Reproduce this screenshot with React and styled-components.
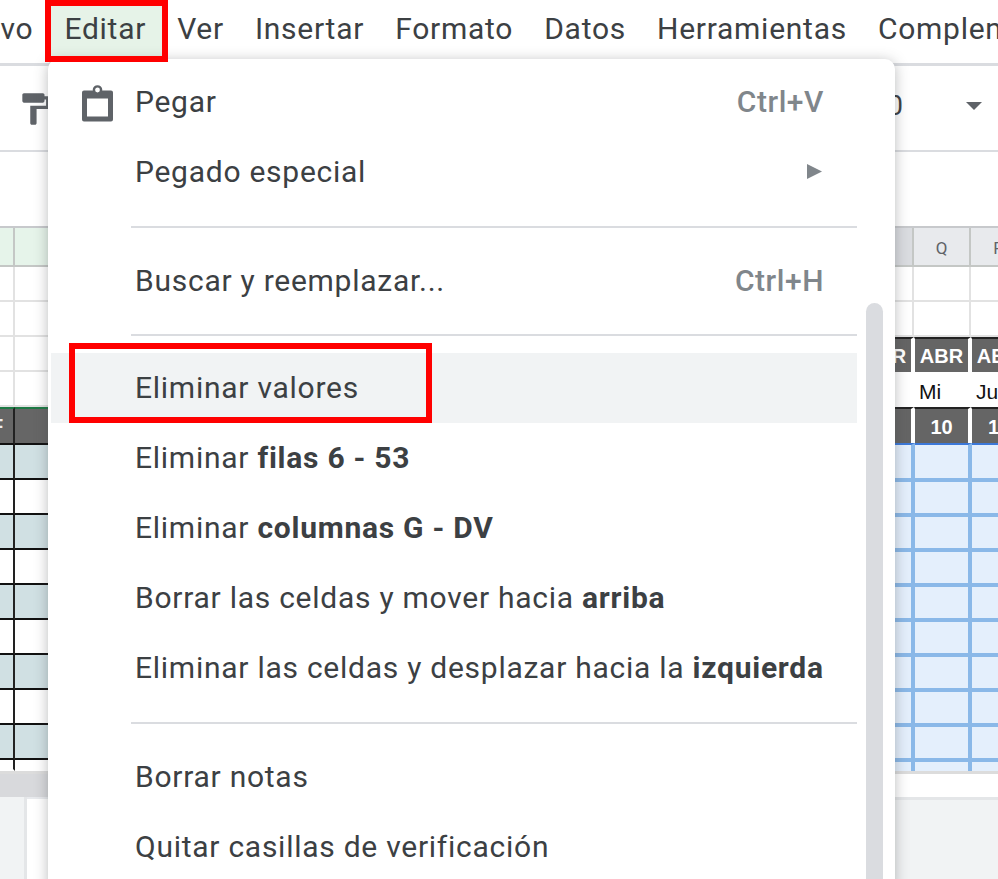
import React from "react";
import styled, { createGlobalStyle } from "styled-components";

const GlobalStyle = createGlobalStyle`
  html, body {
    margin: 0;
    height: 100%;
    background: #fff;
    overflow: hidden;
  }
  * {
    box-sizing: border-box;
  }
`;

const menuLabels = ["vo", "Editar", "Ver", "Insertar", "Formato", "Datos", "Herramientas", "Complementos"];

const tealRows = [true, false, true, false, true, false, true, false, true];

function PasteIcon() {
  return (
    <PasteGlyph width="32" height="37" viewBox="0 0 32 37" fill="none">
      <path
        fillRule="evenodd"
        fill="#5f6368"
        d="M2 5.5h27a2 2 0 0 1 2 2v27a2 2 0 0 1-2 2H2a2 2 0 0 1-2-2v-27a2 2 0 0 1 2-2zM5 13.5v18h21v-18z"
      />
      <circle cx="15.5" cy="5" r="3.6" stroke="#5f6368" strokeWidth="2.4" fill="#fff" />
    </PasteGlyph>
  );
}

function RollerIcon() {
  return (
    <svg width="38" height="38" viewBox="0 0 24 24">
      <path
        fill="#5f6368"
        d="M18 4V3c0-.55-.45-1-1-1H5c-.55 0-1 .45-1 1v4c0 .55.45 1 1 1h12c.55 0 1-.45 1-1V6h1v4H9v11c0 .55.45 1 1 1h2c.55 0 1-.45 1-1v-9h8V4h-3z"
      />
    </svg>
  );
}

function SubmenuArrow() {
  return (
    <svg width="15" height="15" viewBox="0 0 15 15">
      <path d="M0 0l15 7.5L0 15z" fill="#80868b" />
    </svg>
  );
}

function App() {
  return (
    <Page>
      <GlobalStyle />

      <MenuBar>
        {menuLabels.map((label) => (
          <MenuBarItem key={label} $active={label === "Editar"}>
            {label}
            {label === "Editar" && <TopFrame />}
          </MenuBarItem>
        ))}
      </MenuBar>

      <Toolbar>
        <RollerSlot>
          <RollerIcon />
        </RollerSlot>
        <ToolbarRight>
          <ZoomDigit>0</ZoomDigit>
          <Caret />
        </ToolbarRight>
      </Toolbar>

      <FormulaBar />

      <Sheet>
        <LeftPane>
          <LeftRow $h={39} $kind="head">
            <LeftCell $kind="head" />
            <LeftCell $kind="head" />
          </LeftRow>
          {[35, 35, 35, 35].map((h, i) => (
            <LeftRow key={i} $h={h}>
              <LeftCell />
              <LeftCell />
            </LeftRow>
          ))}
          <LeftRow $h={38} $kind="dark">
            <LeftCell $kind="dark">
              <ClippedLetter>F</ClippedLetter>
            </LeftCell>
            <LeftCell $kind="dark" />
          </LeftRow>
          {tealRows.map((teal, i) => (
            <LeftRow key={i} $h={35}>
              <LeftCell $kind={teal ? "teal" : "plain"} />
              <LeftCell $kind={teal ? "teal" : "plain"} />
            </LeftRow>
          ))}
          <LeftRow $h={11}>
            <LeftCell $kind="tail" />
            <LeftCell $kind="end" />
          </LeftRow>
        </LeftPane>

        <RightPane>
          <RightRow $h={39}>
            <HeadCell $selected />
            <HeadCell>Q</HeadCell>
            <HeadCell>R</HeadCell>
          </RightRow>
          <RightRow $h={35}>
            <GridCell />
            <GridCell />
            <GridCell />
          </RightRow>
          <RightRow $h={35}>
            <GridCell />
            <GridCell />
            <GridCell />
          </RightRow>
          <RightRow $h={35}>
            <DarkCell>ABR</DarkCell>
            <DarkCell>ABR</DarkCell>
            <DarkCell>ABR</DarkCell>
          </RightRow>
          <RightRow $h={35}>
            <DayCell />
            <DayCell>Mi</DayCell>
            <DayCell>Ju</DayCell>
          </RightRow>
          <RightRow $h={36}>
            <DarkCell />
            <DarkCell>10</DarkCell>
            <DarkCell>11</DarkCell>
          </RightRow>
          {tealRows.map((_, i) => (
            <RightRow key={i} $h={i === 0 ? 39 : 35} $shift>
              <BlueCell $first={i === 0} />
              <BlueCell $first={i === 0} />
              <BlueCell $first={i === 0} />
            </RightRow>
          ))}
          <RightRow $h={9} $shift>
            <BlueCell $tail />
            <BlueCell $tail />
            <BlueCell $tail />
          </RightRow>
        </RightPane>
      </Sheet>

      <ScrollStrip>
        <ScrollThumb />
        <ScrollBlank />
      </ScrollStrip>

      <TabStrip>
        <TabLeft>
          <TabGrey />
          <TabWhite />
        </TabLeft>
        <TabRight />
      </TabStrip>

      <EditMenu>
        <MenuRow>
          <IconSlot>
            <PasteIcon />
          </IconSlot>
          <RowLabel>Pegar</RowLabel>
          <Shortcut>Ctrl+V</Shortcut>
        </MenuRow>
        <MenuRow>
          <IconSlot />
          <RowLabel>Pegado especial</RowLabel>
          <ArrowSlot>
            <SubmenuArrow />
          </ArrowSlot>
        </MenuRow>
        <Divider />
        <MenuRow>
          <IconSlot />
          <RowLabel>Buscar y reemplazar...</RowLabel>
          <Shortcut>Ctrl+H</Shortcut>
        </MenuRow>
        <Divider $tight />
        <MenuRow $hover>
          <IconSlot />
          <RowLabel>Eliminar valores</RowLabel>
          <ValueFrame />
        </MenuRow>
        <MenuRow>
          <IconSlot />
          <RowLabel>
            Eliminar <b>filas 6 - 53</b>
          </RowLabel>
        </MenuRow>
        <MenuRow>
          <IconSlot />
          <RowLabel>
            Eliminar <b>columnas G - DV</b>
          </RowLabel>
        </MenuRow>
        <MenuRow>
          <IconSlot />
          <RowLabel>
            Borrar las celdas y mover hacia <b>arriba</b>
          </RowLabel>
        </MenuRow>
        <MenuRow>
          <IconSlot />
          <RowLabel>
            Eliminar las celdas y desplazar hacia la <b>izquierda</b>
          </RowLabel>
        </MenuRow>
        <Divider />
        <MenuRow>
          <IconSlot />
          <RowLabel>Borrar notas</RowLabel>
        </MenuRow>
        <MenuRow>
          <IconSlot />
          <RowLabel>Quitar casillas de verificación</RowLabel>
        </MenuRow>
        <MenuScrollbar />
      </EditMenu>
    </Page>
  );
}

const Page = styled.div`
  position: relative;
  width: 998px;
  height: 879px;
  overflow: hidden;
  display: flex;
  flex-direction: column;
  background: #fff;
  font-family: Roboto, "Liberation Sans", sans-serif;
`;

const MenuBar = styled.div`
  display: flex;
  height: 63px;
  margin-left: -15px;
  flex-shrink: 0;
`;

const MenuBarItem = styled.div`
  position: relative;
  height: 100%;
  padding: 12px 15.5px 0;
  font-size: 30px;
  line-height: 34px;
  letter-spacing: 0.74px;
  white-space: nowrap;
  color: #3c4043;
  background: ${(p) => (p.$active ? "#e6f3e8" : "transparent")};
`;

const RedFrame = styled.div`
  position: absolute;
  border: 6px solid #ff0000;
  z-index: 5;
`;

const TopFrame = styled(RedFrame)`
  top: 0;
  left: -4px;
  right: -6px;
  height: 62px;
`;

const ValueFrame = styled(RedFrame)`
  top: -10px;
  left: 18px;
  width: 363px;
  height: 80px;
`;

const Toolbar = styled.div`
  display: flex;
  justify-content: space-between;
  height: 89px;
  flex-shrink: 0;
  border-top: 3px solid #dadce0;
  border-bottom: 2px solid #dadce0;
`;

const RollerSlot = styled.div`
  padding: 24px 0 0 16px;
`;

const ToolbarRight = styled.div`
  display: flex;
  align-items: center;
  gap: 63px;
  padding: 0 16px 4px 0;
`;

const ZoomDigit = styled.span`
  font-size: 27px;
  color: #3c4043;
`;

const Caret = styled.div`
  width: 0;
  height: 0;
  border-left: 8px solid transparent;
  border-right: 8px solid transparent;
  border-top: 8px solid #5f6368;
`;

const FormulaBar = styled.div`
  height: 76px;
  flex-shrink: 0;
  border-bottom: 2px solid #c7c9cc;
`;

const Sheet = styled.div`
  display: flex;
  justify-content: space-between;
  height: 543px;
  flex-shrink: 0;
`;

const LeftPane = styled.div`
  width: 48px;
  overflow: hidden;
  flex-shrink: 0;
`;

const LeftRow = styled.div`
  display: grid;
  grid-template-columns: 15px 57px;
  height: ${(p) => p.$h}px;
`;

const leftCellColors = {
  head: "#e6f4ea",
  dark: "#666666",
  teal: "#d0e0e3",
};

const LeftCell = styled.div`
  position: relative;
  overflow: hidden;
  background: ${(p) => leftCellColors[p.$kind] || "#fff"};
  border-right: 2px solid
    ${(p) => {
      if (p.$kind === "head") return "#c4c7c5";
      if (p.$kind === "end") return "transparent";
      if (p.$kind === "dark" || p.$kind === "teal" || p.$kind === "plain" || p.$kind === "tail") return "#222";
      return "#e2e2e2";
    }};
  border-bottom: 2px solid
    ${(p) => {
      if (p.$kind === "head") return "#c4c7c5";
      if (p.$kind === "tail" || p.$kind === "end") return "transparent";
      if (p.$kind === "dark" || p.$kind === "teal" || p.$kind === "plain") return "#111";
      return "#e2e2e2";
    }};
  ${(p) => p.$kind === "dark" && "border-top: 2px solid #1e7a45;"}
`;

const ClippedLetter = styled.span`
  position: absolute;
  left: -9px;
  top: 6px;
  font: bold 20px "Liberation Sans", Arial, sans-serif;
  color: #eee;
`;

const RightPane = styled.div`
  width: 141px;
  overflow: hidden;
  flex-shrink: 0;
`;

const RightRow = styled.div`
  display: grid;
  grid-template-columns: repeat(3, 57px);
  height: ${(p) => p.$h}px;
  ${(p) => p.$shift && "margin-left: 1px;"}
`;

const HeadCell = styled.div`
  display: flex;
  align-items: center;
  justify-content: center;
  padding-top: 2px;
  font-size: 17px;
  color: #5f6368;
  background: ${(p) => (p.$selected ? "#dadce0" : "#e8eaed")};
  border-right: 2px solid #c4c7c5;
  border-bottom: 2px solid #c4c7c5;
`;

const GridCell = styled.div`
  border-right: 2px solid #e2e2e2;
  border-bottom: 2px solid #e2e2e2;
`;

const DarkCell = styled.div`
  display: flex;
  align-items: center;
  justify-content: center;
  padding-top: 2px;
  font: bold 20px "Liberation Sans", Arial, sans-serif;
  color: #fff;
  background: #656565;
  border-top: 2px solid #222;
  border-left: 1px solid #fff;
  border-right: 3px solid #fff;
  white-space: nowrap;
`;

const DayCell = styled.div`
  display: flex;
  align-items: center;
  padding: 4px 0 0 5px;
  font: 21px "Liberation Sans", Arial, sans-serif;
  color: #111;
`;

const BlueCell = styled.div`
  background: #e4effc;
  border-right: 4px solid #8ab8e8;
  ${(p) => !p.$tail && "border-bottom: 4px solid #8ab8e8;"}
  ${(p) => p.$first && "border-top: 2px solid #3c78d8;"}
`;

const ScrollStrip = styled.div`
  display: flex;
  justify-content: space-between;
  height: 26px;
  flex-shrink: 0;
  border-top: 3px solid #dcdcdc;
`;

const ScrollThumb = styled.div`
  width: 48px;
  background: #d8d9dc;
`;

const ScrollBlank = styled.div`
  width: 105px;
  background: #fff;
`;

const TabStrip = styled.div`
  display: flex;
  justify-content: space-between;
  flex: 1;
`;

const TabLeft = styled.div`
  display: flex;
  width: 48px;
`;

const TabGrey = styled.div`
  width: 27px;
  background: #f1f3f4;
  border-right: 3px solid #e4e6e8;
`;

const TabWhite = styled.div`
  flex: 1;
  background: #fff;
  border-top: 2px solid #e8eaed;
`;

const TabRight = styled.div`
  width: 105px;
  background: #f1f3f4;
  border-top: 3px solid #e4e6e8;
`;

const EditMenu = styled.div`
  position: absolute;
  top: 59px;
  left: 48px;
  width: 847px;
  height: 830px;
  padding: 8px 38px 0 3px;
  background: #fff;
  border-radius: 10px 10px 0 0;
  box-shadow: 0 2px 14px rgba(60, 64, 67, 0.35);
  z-index: 2;
`;

const MenuRow = styled.div`
  position: relative;
  display: flex;
  align-items: center;
  height: 70px;
  padding: 0 33px 2px 31px;
  background: ${(p) => (p.$hover ? "#f1f3f4" : "transparent")};
`;

const IconSlot = styled.div`
  display: flex;
  width: 53px;
  flex-shrink: 0;
`;

const PasteGlyph = styled.svg`
  margin-top: 4px;
`;

const RowLabel = styled.div`
  flex: 1;
  font-size: 30px;
  letter-spacing: 0.74px;
  white-space: nowrap;
  color: #3c4043;

  b {
    font-weight: 700;
    color: #3c4043;
  }
`;

const Shortcut = styled.div`
  font-size: 30px;
  font-weight: 500;
  letter-spacing: 0.55px;
  color: #80868b;
`;

const ArrowSlot = styled.div`
  display: flex;
  padding-right: 2px;
`;

const Divider = styled.div`
  height: 2px;
  margin: ${(p) => (p.$tight ? "18px 0 17px 80px" : "19px 0 18px 80px")};
  background: #dadce0;
`;

const MenuScrollbar = styled.div`
  position: absolute;
  top: 244px;
  left: 818px;
  width: 17px;
  height: 640px;
  border-radius: 9px 9px 0 0;
  background: #dadce0;
`;

export default App;
